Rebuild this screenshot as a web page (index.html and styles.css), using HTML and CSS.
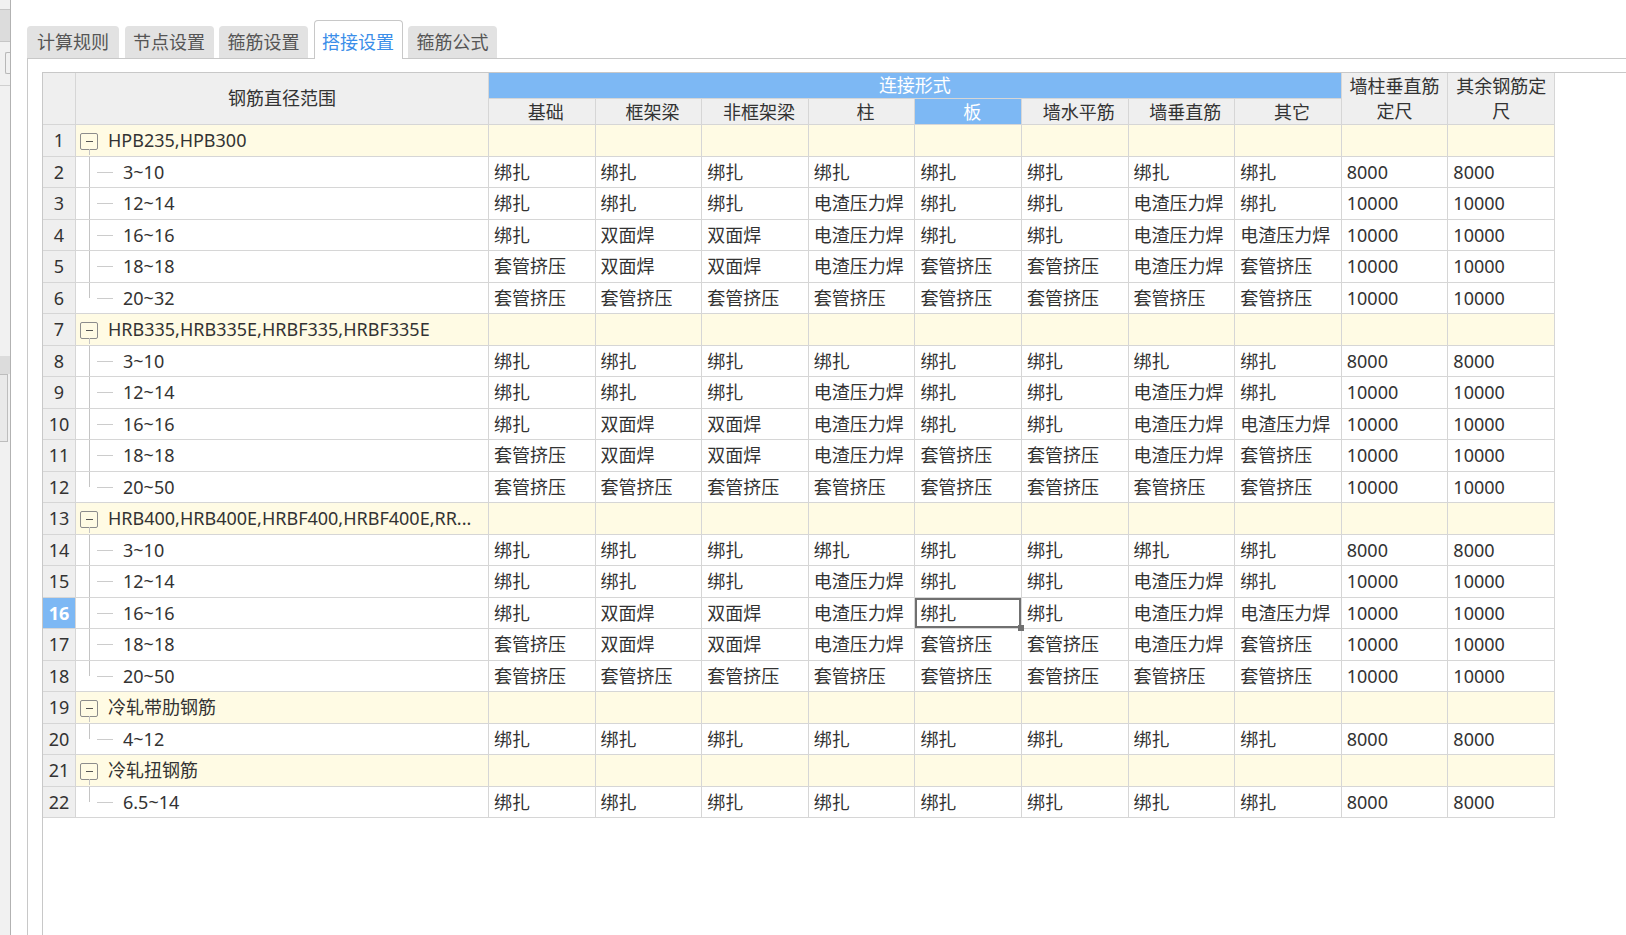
FILE: index.html
```html
<!DOCTYPE html>
<html lang="zh-CN">
<head>
<meta charset="utf-8">
<title>搭接设置</title>
<link rel="stylesheet" href="styles.css">
</head>
<body>
<div class="app">
  <div class="side">
    <div class="s-gap1"></div>
    <div class="s-box1"></div>
    <div class="s-icon"></div>
    <div class="s-line"></div>
    <div class="s-gap2"></div>
    <div class="s-band"></div>
    <div class="s-box2"></div>
  </div>
  <div class="main">
    <div class="tabs">
      <div class="tab first">计算规则</div>
      <div class="tab">节点设置</div>
      <div class="tab">箍筋设置</div>
      <div class="tab active">搭接设置</div>
      <div class="tab">箍筋公式</div>
    </div>
    <div class="panel">
      <div class="grid">
        <table>
          <colgroup>
            <col class="c-num"><col class="c-name">
            <col><col><col><col><col><col><col><col><col><col>
          </colgroup>
          <thead>
            <tr class="h1">
              <th rowspan="2" class="hnum"></th>
              <th rowspan="2">钢筋直径范围</th>
              <th colspan="8" class="blue">连接形式</th>
              <th rowspan="2" class="wrap">墙柱垂直筋定尺</th>
              <th rowspan="2" class="wrap">其余钢筋定尺</th>
            </tr>
            <tr class="h2">
              <th>基础</th><th>框架梁</th><th>非框架梁</th><th>柱</th><th class="blue">板</th><th>墙水平筋</th><th>墙垂直筋</th><th>其它</th>
            </tr>
          </thead>
          <tbody>
            <tr class="grp"><td class="num">1</td><td class="name"><div class="tree"><span class="tog"></span><span class="lbl">HPB235,HPB300</span></div></td><td></td><td></td><td></td><td></td><td></td><td></td><td></td><td></td><td></td><td></td></tr>
            <tr><td class="num">2</td><td class="name"><div class="tree"><span class="conn"></span><span class="lbl">3~10</span></div></td><td>绑扎</td><td>绑扎</td><td>绑扎</td><td>绑扎</td><td>绑扎</td><td>绑扎</td><td>绑扎</td><td>绑扎</td><td>8000</td><td>8000</td></tr>
            <tr><td class="num">3</td><td class="name"><div class="tree"><span class="conn"></span><span class="lbl">12~14</span></div></td><td>绑扎</td><td>绑扎</td><td>绑扎</td><td>电渣压力焊</td><td>绑扎</td><td>绑扎</td><td>电渣压力焊</td><td>绑扎</td><td>10000</td><td>10000</td></tr>
            <tr><td class="num">4</td><td class="name"><div class="tree"><span class="conn"></span><span class="lbl">16~16</span></div></td><td>绑扎</td><td>双面焊</td><td>双面焊</td><td>电渣压力焊</td><td>绑扎</td><td>绑扎</td><td>电渣压力焊</td><td>电渣压力焊</td><td>10000</td><td>10000</td></tr>
            <tr><td class="num">5</td><td class="name"><div class="tree"><span class="conn"></span><span class="lbl">18~18</span></div></td><td>套管挤压</td><td>双面焊</td><td>双面焊</td><td>电渣压力焊</td><td>套管挤压</td><td>套管挤压</td><td>电渣压力焊</td><td>套管挤压</td><td>10000</td><td>10000</td></tr>
            <tr><td class="num">6</td><td class="name"><div class="tree"><span class="conn last"></span><span class="lbl">20~32</span></div></td><td>套管挤压</td><td>套管挤压</td><td>套管挤压</td><td>套管挤压</td><td>套管挤压</td><td>套管挤压</td><td>套管挤压</td><td>套管挤压</td><td>10000</td><td>10000</td></tr>

            <tr class="grp"><td class="num">7</td><td class="name"><div class="tree"><span class="tog"></span><span class="lbl">HRB335,HRB335E,HRBF335,HRBF335E</span></div></td><td></td><td></td><td></td><td></td><td></td><td></td><td></td><td></td><td></td><td></td></tr>
            <tr><td class="num">8</td><td class="name"><div class="tree"><span class="conn"></span><span class="lbl">3~10</span></div></td><td>绑扎</td><td>绑扎</td><td>绑扎</td><td>绑扎</td><td>绑扎</td><td>绑扎</td><td>绑扎</td><td>绑扎</td><td>8000</td><td>8000</td></tr>
            <tr><td class="num">9</td><td class="name"><div class="tree"><span class="conn"></span><span class="lbl">12~14</span></div></td><td>绑扎</td><td>绑扎</td><td>绑扎</td><td>电渣压力焊</td><td>绑扎</td><td>绑扎</td><td>电渣压力焊</td><td>绑扎</td><td>10000</td><td>10000</td></tr>
            <tr><td class="num">10</td><td class="name"><div class="tree"><span class="conn"></span><span class="lbl">16~16</span></div></td><td>绑扎</td><td>双面焊</td><td>双面焊</td><td>电渣压力焊</td><td>绑扎</td><td>绑扎</td><td>电渣压力焊</td><td>电渣压力焊</td><td>10000</td><td>10000</td></tr>
            <tr><td class="num">11</td><td class="name"><div class="tree"><span class="conn"></span><span class="lbl">18~18</span></div></td><td>套管挤压</td><td>双面焊</td><td>双面焊</td><td>电渣压力焊</td><td>套管挤压</td><td>套管挤压</td><td>电渣压力焊</td><td>套管挤压</td><td>10000</td><td>10000</td></tr>
            <tr><td class="num">12</td><td class="name"><div class="tree"><span class="conn last"></span><span class="lbl">20~50</span></div></td><td>套管挤压</td><td>套管挤压</td><td>套管挤压</td><td>套管挤压</td><td>套管挤压</td><td>套管挤压</td><td>套管挤压</td><td>套管挤压</td><td>10000</td><td>10000</td></tr>

            <tr class="grp"><td class="num">13</td><td class="name"><div class="tree"><span class="tog"></span><span class="lbl">HRB400,HRB400E,HRBF400,HRBF400E,RR...</span></div></td><td></td><td></td><td></td><td></td><td></td><td></td><td></td><td></td><td></td><td></td></tr>
            <tr><td class="num">14</td><td class="name"><div class="tree"><span class="conn"></span><span class="lbl">3~10</span></div></td><td>绑扎</td><td>绑扎</td><td>绑扎</td><td>绑扎</td><td>绑扎</td><td>绑扎</td><td>绑扎</td><td>绑扎</td><td>8000</td><td>8000</td></tr>
            <tr><td class="num">15</td><td class="name"><div class="tree"><span class="conn"></span><span class="lbl">12~14</span></div></td><td>绑扎</td><td>绑扎</td><td>绑扎</td><td>电渣压力焊</td><td>绑扎</td><td>绑扎</td><td>电渣压力焊</td><td>绑扎</td><td>10000</td><td>10000</td></tr>
            <tr><td class="num cur">16</td><td class="name"><div class="tree"><span class="conn"></span><span class="lbl">16~16</span></div></td><td>绑扎</td><td>双面焊</td><td>双面焊</td><td>电渣压力焊</td><td class="sel">绑扎</td><td>绑扎</td><td>电渣压力焊</td><td>电渣压力焊</td><td>10000</td><td>10000</td></tr>
            <tr><td class="num">17</td><td class="name"><div class="tree"><span class="conn"></span><span class="lbl">18~18</span></div></td><td>套管挤压</td><td>双面焊</td><td>双面焊</td><td>电渣压力焊</td><td>套管挤压</td><td>套管挤压</td><td>电渣压力焊</td><td>套管挤压</td><td>10000</td><td>10000</td></tr>
            <tr><td class="num">18</td><td class="name"><div class="tree"><span class="conn last"></span><span class="lbl">20~50</span></div></td><td>套管挤压</td><td>套管挤压</td><td>套管挤压</td><td>套管挤压</td><td>套管挤压</td><td>套管挤压</td><td>套管挤压</td><td>套管挤压</td><td>10000</td><td>10000</td></tr>

            <tr class="grp"><td class="num">19</td><td class="name"><div class="tree"><span class="tog"></span><span class="lbl">冷轧带肋钢筋</span></div></td><td></td><td></td><td></td><td></td><td></td><td></td><td></td><td></td><td></td><td></td></tr>
            <tr><td class="num">20</td><td class="name"><div class="tree"><span class="conn last"></span><span class="lbl">4~12</span></div></td><td>绑扎</td><td>绑扎</td><td>绑扎</td><td>绑扎</td><td>绑扎</td><td>绑扎</td><td>绑扎</td><td>绑扎</td><td>8000</td><td>8000</td></tr>

            <tr class="grp"><td class="num">21</td><td class="name"><div class="tree"><span class="tog"></span><span class="lbl">冷轧扭钢筋</span></div></td><td></td><td></td><td></td><td></td><td></td><td></td><td></td><td></td><td></td><td></td></tr>
            <tr><td class="num">22</td><td class="name"><div class="tree"><span class="conn last"></span><span class="lbl">6.5~14</span></div></td><td>绑扎</td><td>绑扎</td><td>绑扎</td><td>绑扎</td><td>绑扎</td><td>绑扎</td><td>绑扎</td><td>绑扎</td><td>8000</td><td>8000</td></tr>
          </tbody>
        </table>
      </div>
    </div>
  </div>
</div>
</body>
</html>
```

FILE: styles.css
```css
* { box-sizing: border-box; }
html, body { margin: 0; height: 100%; }
body {
  font-family: "Noto Sans", "Noto Sans CJK SC", sans-serif;
  font-size: 18px;
  color: #333;
  background: #fff;
  overflow: hidden;
}
.app { display: flex; height: 935px; }

/* left strip */
.side {
  width: 11px;
  flex: none;
  background: #f1f1f1;
  border-right: 1px solid #b2b2b2;
  display: flex;
  flex-direction: column;
}
.s-gap1 { height: 9px; }
.s-box1 { height: 33px; background: #dcdcdc; border-top: 1px solid #c6c6c6; border-bottom: 1px solid #c6c6c6; }
.s-icon { height: 22px; margin: 10px 0 0 5px; border: 1px solid #b8b8b8; border-right: none; border-radius: 2px 0 0 2px; }
.s-line { height: 1px; margin-top: 11px; background: #d0d0d0; }
.s-gap2 { height: 270px; }
.s-band { height: 18px; background: #dcdcdc; }
.s-box2 { height: 68px; background: #e9e9e9; border: 1px solid #bdbdbd; border-left: none; margin-right: 2px; }

/* main area */
.main {
  flex: 1;
  min-width: 0;
  display: flex;
  flex-direction: column;
  padding: 20px 0 0 16px;
}
.tabs {
  display: flex;
  align-items: flex-end;
  height: 38px;
  gap: 5.5px;
  position: relative;
  z-index: 1;
}
.tab {
  height: 32px;
  width: 89px;
  text-align: center;
  line-height: 32px;
  background: #e2e2e2;
  border-radius: 4px 4px 0 0;
  color: #555;
}
.tab.first { width: 92px; }
.tab.active {
  height: 39px;
  margin-bottom: -1px;
  padding-top: 5px;
  background: #fff;
  border: 1px solid #c8c8c8;
  border-bottom: none;
  color: #3b8ee9;
}

.panel {
  flex: 1;
  min-height: 0;
  border-top: 1px solid #c8c8c8;
  border-left: 1px solid #c8c8c8;
  padding: 13px 0 0 14px;
  display: flex;
  flex-direction: column;
}
.grid {
  flex: 1;
  min-height: 0;
  border-left: 1px solid #c8c8c8;
  border-top: 1px solid #c8c8c8;
  overflow: hidden;
}

/* table */
table {
  border-collapse: separate;
  border-spacing: 0;
  table-layout: fixed;
  width: 1512px;
}
col.c-num { width: 33px; }
col.c-name { width: 413px; }
th, td {
  border-right: 1px solid #d6d6d6;
  border-bottom: 1px solid #d6d6d6;
  white-space: nowrap;
  overflow: hidden;
  font-weight: normal;
  vertical-align: middle;
}
th {
  background: #efefef;
  text-align: center;
  padding: 0 4px;
  line-height: 25px;
}
tr.h2 th { padding: 1px 0 0 8px; line-height: 23px; }
th.wrap { white-space: normal; }
th.blue { background: #7db8f4; color: #fff; }
tr.h1 { height: 26px; }
tr.h2 { height: 26px; }
tbody tr { height: 31.5px; }
td {
  padding: 0 0 0 5px;
  text-align: left;
  line-height: 24px;
}
td.num {
  background: #efefef;
  text-align: center;
  padding: 0;
}
td.num.cur { background: #7db8f4; color: #fff; font-weight: bold; }
tr.grp td { background: #fffbe4; }
tr.grp td.num { background: #efefef; }

td.sel {
  position: relative;
  overflow: visible;
  box-shadow: inset 0 0 0 2px #707070;
}
td.sel::after {
  content: "";
  position: absolute;
  right: -3px;
  bottom: -3px;
  width: 6px;
  height: 6px;
  background: #707070;
  z-index: 2;
}

/* tree column */
td.name { padding: 0; overflow: hidden; }
.tree {
  display: flex;
  align-items: center;
  height: 30.5px;
}
.tog {
  position: relative;
  flex: none;
  width: 18px;
  height: 17px;
  margin: 2px 10px 0 4px;
  border: 1px solid #8c8c8c;
  border-radius: 2px;
  display: flex;
  align-items: center;
  justify-content: center;
}
.tog::before {
  content: "";
  width: 7px;
  height: 1px;
  background: #555;
}
.tog::after {
  content: "";
  position: absolute;
  top: 100%;
  left: 8px;
  height: 6px;
  border-left: 1px solid #c4c4c4;
}
.conn {
  position: relative;
  flex: none;
  align-self: stretch;
  width: 24px;
  margin: 0 10px 0 13px;
}
.conn::before {
  content: "";
  position: absolute;
  left: 0;
  top: 0;
  bottom: -1px;
  border-left: 1px solid #c4c4c4;
}
.conn.last::before { bottom: 50%; }
.conn::after {
  content: "";
  position: absolute;
  left: 8px;
  right: 0;
  top: 50%;
  border-top: 1px solid #cccccc;
}
.lbl { white-space: nowrap; }
```
